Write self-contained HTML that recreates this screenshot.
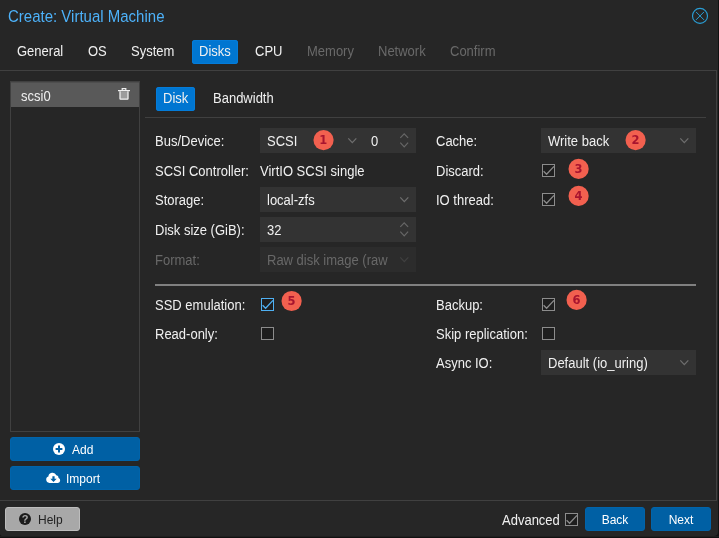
<!DOCTYPE html>
<html>
<head>
<meta charset="utf-8">
<title>Create: Virtual Machine</title>
<style>
html,body{margin:0;padding:0;}
body{width:719px;height:538px;background:#111;overflow:hidden;position:relative;
 font-family:"Liberation Sans",sans-serif;font-size:13px;color:#f0f0f0;}
#win{position:absolute;left:0;top:0;width:718px;height:536px;background:#262626;border-radius:0 0 4px 2px;will-change:transform;}
.a{position:absolute;white-space:nowrap;}
.t{height:24px;line-height:24px;transform:scaleY(1.055);transform-origin:0 16px;}
.title{left:8px;top:7px;font-size:15px;line-height:19px;color:#4db2fa;transform:scaleY(1.07);transform-origin:0 15px;}
.tab{top:40px;height:24px;line-height:24px;font-size:13px;color:#f0f0f0;}
.tab span{display:inline-block;height:24px;transform:scaleY(1.055);transform-origin:0 16px;}
.tab.dis{color:#696969;}
.tab.act{background:#0076d1;border-radius:3px;padding:0 7px;box-shadow:inset 0 0 0 1px #047cd9;}
.hl{background:#404040;height:1px;}
.dis2{color:#686868;}
.fld{background:#333333;height:25px;}
.fld.dis{background:#2c2c2c;}
.badge{width:20px;height:20px;border-radius:50%;background:#f2604f;color:#a8142f;
 font-family:"DejaVu Sans","Liberation Sans",sans-serif;font-weight:bold;font-size:12px;line-height:20px;text-align:center;}
.cb{width:11px;height:11px;border:1px solid #8c8c8c;background:#1e1e1e;}
.btn{height:24px;background:#0060a4;border-radius:3px;border:1px solid #0064ab;box-sizing:border-box;}
.bt{height:24px;line-height:24px;color:#fff;font-size:12px;text-align:center;}
svg{position:absolute;overflow:visible;}
</style>
</head>
<body>
<div class="a" style="left:0;top:536px;width:719px;height:1px;background:#1f1f1f"></div>
<div id="win">
<div class="a title">Create: Virtual Machine</div>
<svg style="left:692px;top:8px" width="16" height="16" viewBox="0 0 16 16"><circle cx="8" cy="7.9" r="7.5" fill="none" stroke="#2a9dd4" stroke-width="1.15"/><path d="M4 3.9L12 11.9M12 3.9L4 11.9" stroke="#2a9dd4" stroke-width="1" fill="none"/></svg>

<div class="a tab " style="left:17px"><span>General</span></div>
<div class="a tab " style="left:88px"><span>OS</span></div>
<div class="a tab " style="left:131px"><span>System</span></div>
<div class="a tab act" style="left:192px"><span>Disks</span></div>
<div class="a tab " style="left:255px"><span>CPU</span></div>
<div class="a tab dis" style="left:307px"><span>Memory</span></div>
<div class="a tab dis" style="left:378px"><span>Network</span></div>
<div class="a tab dis" style="left:450px"><span>Confirm</span></div>
<div class="a hl" style="left:0;top:70px;width:717px"></div>
<div class="a" style="left:716px;top:70px;width:1px;height:431px;background:#404040"></div>
<div class="a hl" style="left:0;top:500px;width:717px"></div>
<div class="a" style="left:10px;top:81px;width:128px;height:349px;border:1px solid #404040"></div>
<div class="a" style="left:11px;top:82px;width:128px;height:25px;background:#595959;border-top:1px solid #4e4e4e;box-sizing:border-box"></div>
<div class="a t " style="left:21px;top:85px">scsi0</div>
<svg style="left:118px;top:88px" width="12" height="12" viewBox="0 0 12 12"><path d="M0 2.6h12M4.2 2.3V0.7h3.6v1.6" stroke="#efefef" stroke-width="1.2" fill="none"/><path d="M2 3.2v7.4a0.6 0.6 0 0 0 0.6 0.6h6.8a0.6 0.6 0 0 0 0.6-0.6V3.2" stroke="#efefef" stroke-width="1.3" fill="#9c9c9c"/></svg>
<div class="a btn" style="left:10px;top:437px;width:130px"></div>
<div class="a bt" style="left:72px;top:438px">Add</div>
<svg style="left:53px;top:443px" width="12" height="12" viewBox="0 0 12 12"><circle cx="6" cy="6" r="6" fill="#fff"/><path d="M6 2.6v6.8M2.6 6h6.8" stroke="#0060a4" stroke-width="2"/></svg>
<div class="a btn" style="left:10px;top:466px;width:130px"></div>
<div class="a bt" style="left:66px;top:467px">Import</div>
<svg style="left:45.6px;top:472px" width="15" height="11" viewBox="0 0 15 11"><path d="M3.3 11a3.3 3.3 0 0 1-0.9-6.4a4.1 4.1 0 0 1 7.9-1.3a2.6 2.6 0 0 1 2.3 2.6a2.7 2.7 0 0 1-0.6 5.1z" fill="#fff"/><path d="M6.4 4.2h2.2v2.5h2.1l-3.2 3.3l-3.2-3.3h2.1z" fill="#0060a4"/></svg>
<div class="a" style="left:156px;top:87px;width:39px;height:24px;background:#0076d1;border-radius:3px;box-shadow:inset 0 0 0 1px #047cd9"></div>
<div class="a t " style="left:163px;top:87px">Disk</div>
<div class="a t " style="left:213px;top:87px">Bandwidth</div>
<div class="a hl" style="left:145px;top:117px;width:561px"></div>
<div class="a t " style="left:155px;top:130px">Bus/Device:</div>
<div class="a fld" style="left:260px;top:128px;width:156px"></div><div class="a t " style="left:267px;top:130px">SCSI</div>
<svg style="left:311px;top:128px" width="24" height="24" viewBox="0 0 24 24"><circle cx="12.55" cy="12.05" r="10.1" fill="#f2604f"/><text x="12.35" y="16.25" text-anchor="middle" font-family="DejaVu Sans, Liberation Sans, sans-serif" font-weight="bold" font-size="11.5" fill="#a8142f">1</text></svg>
<svg style="left:348px;top:137.5px" width="9" height="6" viewBox="0 0 9 6"><path d="M0.3 0.4L4.3 4.7L8.3 0.4" stroke="#6e6e6e" stroke-width="1.25" fill="none"/></svg>
<div class="a t " style="left:371px;top:130px">0</div>
<svg style="left:400px;top:133px" width="9" height="15" viewBox="0 0 9 15"><path d="M0.3 4.9L4.2 0.8L8.1 4.9M0.3 9.7L4.2 13.8L8.1 9.7" stroke="#676767" stroke-width="1.2" fill="none"/></svg>
<div class="a t " style="left:155px;top:160px">SCSI Controller:</div>
<div class="a t " style="left:260px;top:160px">VirtIO SCSI single</div>
<div class="a t " style="left:155px;top:189px">Storage:</div>
<div class="a fld" style="left:260px;top:187px;width:156px"></div><div class="a t " style="left:267px;top:189px">local-zfs</div>
<svg style="left:400px;top:196.5px" width="9" height="6" viewBox="0 0 9 6"><path d="M0.3 0.4L4.3 4.7L8.3 0.4" stroke="#6e6e6e" stroke-width="1.25" fill="none"/></svg>
<div class="a t " style="left:155px;top:219px">Disk size (GiB):</div>
<div class="a fld" style="left:260px;top:217px;width:156px"></div><div class="a t " style="left:267px;top:219px">32</div>
<svg style="left:400px;top:222px" width="9" height="15" viewBox="0 0 9 15"><path d="M0.3 4.9L4.2 0.8L8.1 4.9M0.3 9.7L4.2 13.8L8.1 9.7" stroke="#676767" stroke-width="1.2" fill="none"/></svg>
<div class="a t dis2" style="left:155px;top:249px">Format:</div>
<div class="a fld dis" style="left:260px;top:247px;width:156px"></div><div class="a t dis2" style="left:267px;top:249px">Raw disk image (raw</div>
<svg style="left:400px;top:256.5px" width="9" height="6" viewBox="0 0 9 6"><path d="M0.3 0.4L4.3 4.7L8.3 0.4" stroke="#404040" stroke-width="1.25" fill="none"/></svg>
<div class="a t " style="left:436px;top:130px">Cache:</div>
<div class="a fld" style="left:541px;top:128px;width:155px"></div><div class="a t " style="left:548px;top:130px">Write back</div>
<svg style="left:623px;top:128px" width="24" height="24" viewBox="0 0 24 24"><circle cx="12.6" cy="12.05" r="10.1" fill="#f2604f"/><text x="12.4" y="16.25" text-anchor="middle" font-family="DejaVu Sans, Liberation Sans, sans-serif" font-weight="bold" font-size="11.5" fill="#a8142f">2</text></svg>
<svg style="left:680px;top:137.5px" width="9" height="6" viewBox="0 0 9 6"><path d="M0.3 0.4L4.3 4.7L8.3 0.4" stroke="#6e6e6e" stroke-width="1.25" fill="none"/></svg>
<div class="a t " style="left:436px;top:160px">Discard:</div>
<div class="a cb" style="left:542px;top:164px;border-color:#8c8c8c"></div><svg style="left:542px;top:164px" width="13" height="13" viewBox="0 0 13 13"><path d="M1.6 7.3L4.6 10.3L12 2.4" stroke="#8c8c8c" stroke-width="1.3" fill="none"/></svg>
<svg style="left:566px;top:156px" width="24" height="24" viewBox="0 0 24 24"><circle cx="12.6" cy="12.9" r="10.1" fill="#f2604f"/><text x="12.4" y="17.1" text-anchor="middle" font-family="DejaVu Sans, Liberation Sans, sans-serif" font-weight="bold" font-size="11.5" fill="#a8142f">3</text></svg>
<div class="a t " style="left:436px;top:189px">IO thread:</div>
<div class="a cb" style="left:542px;top:193px;border-color:#8c8c8c"></div><svg style="left:542px;top:193px" width="13" height="13" viewBox="0 0 13 13"><path d="M1.6 7.3L4.6 10.3L12 2.4" stroke="#8c8c8c" stroke-width="1.3" fill="none"/></svg>
<svg style="left:566px;top:183px" width="24" height="24" viewBox="0 0 24 24"><circle cx="12.6" cy="12.95" r="10.1" fill="#f2604f"/><text x="12.4" y="17.15" text-anchor="middle" font-family="DejaVu Sans, Liberation Sans, sans-serif" font-weight="bold" font-size="11.5" fill="#a8142f">4</text></svg>
<div class="a" style="left:155px;top:284px;width:541px;height:2px;background:#808080"></div>
<div class="a t " style="left:155px;top:294px">SSD emulation:</div>
<div class="a cb" style="left:261px;top:298px;border-color:#4fb0f2"></div><svg style="left:261px;top:298px" width="13" height="13" viewBox="0 0 13 13"><path d="M1.6 7.3L4.6 10.3L12 2.4" stroke="#4fb0f2" stroke-width="1.3" fill="none"/></svg>
<svg style="left:279px;top:289px" width="24" height="24" viewBox="0 0 24 24"><circle cx="12.6" cy="12.0" r="10.1" fill="#f2604f"/><text x="12.4" y="16.2" text-anchor="middle" font-family="DejaVu Sans, Liberation Sans, sans-serif" font-weight="bold" font-size="11.5" fill="#a8142f">5</text></svg>
<div class="a t " style="left:155px;top:323px">Read-only:</div>
<div class="a cb" style="left:261px;top:327px;border-color:#8c8c8c"></div>
<div class="a t " style="left:436px;top:294px">Backup:</div>
<div class="a cb" style="left:542px;top:298px;border-color:#8c8c8c"></div><svg style="left:542px;top:298px" width="13" height="13" viewBox="0 0 13 13"><path d="M1.6 7.3L4.6 10.3L12 2.4" stroke="#8c8c8c" stroke-width="1.3" fill="none"/></svg>
<svg style="left:564px;top:287px" width="24" height="24" viewBox="0 0 24 24"><circle cx="12.6" cy="12.9" r="10.1" fill="#f2604f"/><text x="12.4" y="17.1" text-anchor="middle" font-family="DejaVu Sans, Liberation Sans, sans-serif" font-weight="bold" font-size="11.5" fill="#a8142f">6</text></svg>
<div class="a t " style="left:436px;top:323px">Skip replication:</div>
<div class="a cb" style="left:542px;top:327px;border-color:#8c8c8c"></div>
<div class="a t " style="left:436px;top:352px">Async IO:</div>
<div class="a fld" style="left:541px;top:350px;width:155px"></div><div class="a t " style="left:548px;top:352px">Default (io_uring)</div>
<svg style="left:680px;top:359.5px" width="9" height="6" viewBox="0 0 9 6"><path d="M0.3 0.4L4.3 4.7L8.3 0.4" stroke="#6e6e6e" stroke-width="1.25" fill="none"/></svg>
<div class="a" style="left:5px;top:507px;width:73px;height:22px;background:#a8a8a8;border:1px solid #bdbdbd;border-radius:3px"></div>
<svg style="left:19px;top:513px" width="12" height="12" viewBox="0 0 12 12"><circle cx="6" cy="6" r="6" fill="#1c1c1c"/></svg>
<div class="a" style="left:19px;top:513px;width:12px;height:12px;line-height:13px;text-align:center;font-size:11px;font-weight:bold;color:#a8a8a8">?</div>
<div class="a bt" style="left:38px;top:508px;color:#222">Help</div>
<div class="a t " style="left:502px;top:509px">Advanced</div>
<div class="a cb" style="left:565px;top:513px;border-color:#8c8c8c"></div><svg style="left:565px;top:513px" width="13" height="13" viewBox="0 0 13 13"><path d="M1.6 7.3L4.6 10.3L12 2.4" stroke="#8c8c8c" stroke-width="1.3" fill="none"/></svg>
<div class="a btn" style="left:585px;top:507px;width:60px"></div>
<div class="a bt" style="left:585px;top:508px;width:60px">Back</div>
<div class="a btn" style="left:651px;top:507px;width:60px"></div>
<div class="a bt" style="left:651px;top:508px;width:60px">Next</div>
</div>
</body>
</html>
